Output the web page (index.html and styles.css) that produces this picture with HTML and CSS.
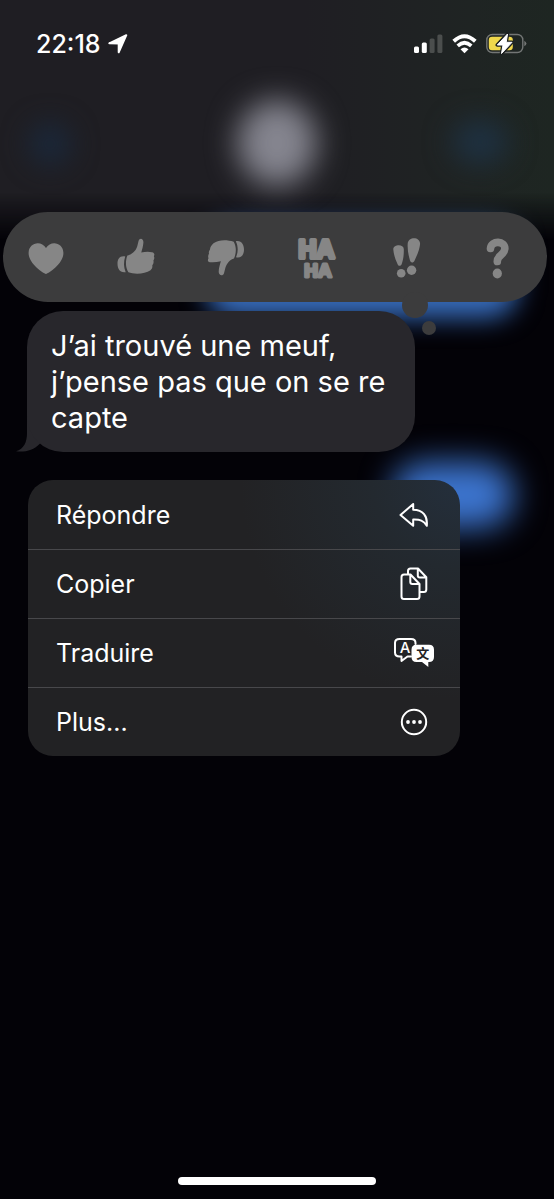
FILE: index.html
```html
<!DOCTYPE html>
<html lang="fr">
<head>
<meta charset="utf-8">
<meta name="viewport" content="width=device-width, initial-scale=1">
<title>Messages</title>
<link rel="stylesheet" href="styles.css">
</head>
<body>
<div class="backdrop" aria-hidden="true">
  <div class="glow sent-one"></div>
  <div class="glow sent-two"></div>
  <div class="glow nav-shade"></div>
  <div class="glow back"></div>
  <div class="glow avatar"></div>
  <div class="glow video"></div>
</div>
<header class="status">
  <div class="status-group">
    <time class="clock">22:18</time>
    <svg class="arrow" width="20" height="20" viewBox="0 0 20 20" aria-hidden="true"><path d="M1.300 9.300 18.300 1.200 10.700 18.300V9.500Z" fill="#fff" stroke="#fff" stroke-width="2" stroke-linejoin="round"/></svg>
  </div>
  <div class="status-group right">
    <svg width="30" height="20" viewBox="0 0 30 20" aria-hidden="true">
      <rect x="0" y="12.500" width="5" height="6.500" rx="1.500" fill="#fff"/>
      <rect x="7.800" y="8.500" width="5" height="10.500" rx="1.500" fill="#fff"/>
      <rect x="15.600" y="4.500" width="5" height="14.500" rx="1.500" fill="#4b4e4d"/>
      <rect x="23.400" y=".5" width="5" height="18.500" rx="1.500" fill="#4b4e4d"/>
    </svg>
    <svg width="26" height="20" viewBox="0 0 26 20" aria-hidden="true">
      <path d="M1.700 7.300Q12.500-2.700 23.300 7.300" fill="none" stroke="#fff" stroke-width="3.900"/>
      <path d="M5.700 11.900Q12.500 5.600 19.300 11.900" fill="none" stroke="#fff" stroke-width="3.600"/>
      <path d="M8.500 15.300Q12.500 11.800 16.500 15.300L12.500 19.300Z" fill="#fff"/>
    </svg>
    <svg width="41" height="24" viewBox="0 0 41 24" aria-hidden="true">
      <rect x=".8" y="2.500" width="36" height="18" rx="5.500" fill="none" stroke="#737675" stroke-width="1.400"/>
      <path d="M38.300 8.700q4.200 2.800 0 5.600z" fill="#737675"/>
      <rect x="2.800" y="4.700" width="24" height="13.600" rx="3.300" fill="#f0d84c"/>
      <path d="M21.500 2 11.300 13H17L15.500 21.500 26 10.300H20.200Z" fill="#1d2121" stroke="#1d2121" stroke-width="3.600" stroke-linejoin="round"/>
      <path d="M21.500 2 11.300 13H17L15.500 21.500 26 10.300H20.200Z" fill="#fff" stroke="#fff" stroke-width="1" stroke-linejoin="round"/>
    </svg>
  </div>
</header>
<main class="focus">
  <div class="reactions" role="toolbar" aria-label="Réactions">
    <button class="reaction" aria-label="J’adore"><svg width="44" height="44" viewBox="0 0 44 44"><path d="M22 39C19 38 4.600 28.800 4.600 18 4.600 7.500 17.200 5 22 13 26.800 5 39.400 7.500 39.400 18 39.400 28.800 25 38 22 39Z"/></svg></button>
    <button class="reaction" aria-label="J’aime"><svg width="44" height="44" viewBox="0 0 44 44"><path d="M13.400 20.600C17.500 19.500 21.500 16.500 23.200 11.500L24.600 5.700C25.500 2.500 29.600 3 29.400 7.500 29.200 11.500 28 14.500 27.300 17.600Q33 16.200 38 17.200C40.500 17.700 40.800 19.500 39.900 21.200 40.700 23 40.300 24.500 39.400 25.600 39.900 27.500 39.500 29 38.300 30.300 38.600 32.500 38 34 36.500 35.200 31 39.200 20 39.500 14.400 37.200 11.500 33 11.200 26 13.400 20.600Z"/><path d="M11.200 21.500C5.500 20.500 3.500 24.500 3.500 28.500 3.500 33.500 5.500 38 11.700 37.200 9.500 32 9.500 27 11.200 21.500Z"/></svg></button>
    <button class="reaction" aria-label="Je n’aime pas"><svg width="44" height="44" viewBox="0 0 44 44"><path d="M30 23.500C26 24.500 22.500 28.500 21.200 33.500L20 38.200C19 41.500 14.500 40.800 14.700 36.500 14.800 33 16 29 16.900 26.200Q11 27.800 6 27.200C3.500 26.900 3.500 25 4.500 23.200 3.800 21.500 4.200 20 5 18.800 4.500 17 5.200 15.500 6 14.400 6 12 7.500 10 9.500 8.200 14.500 4.500 23 4.500 29.700 6.700 32.500 11.500 32.500 18 30 23.500Z"/><path d="M31.800 6.200C37.500 5 40 10 40 14.500 40 19.500 37.500 23.500 32 22.200 34.300 17 34.300 11.500 31.800 6.200Z"/></svg></button>
    <button class="reaction" aria-label="Haha"><svg class="haha" width="44" height="44" viewBox="0 0 44 44"><text class="ha-large" x="21.500" y="23">HA</text><text class="ha-small" x="23" y="42">HA</text></svg></button>
    <button class="reaction" aria-label="Exclamation"><svg width="44" height="44" viewBox="0 0 44 44"><path d="M8.300 14.500C8 9.500 18.500 8.500 18.800 14 19 20.500 18 25.500 16.800 28.800 16 31.500 13.300 31.500 12.500 29 10.500 24.500 8.700 20 8.300 14.500Z"/><path d="M22.700 8.500C23.500 1.300 35.200 1.500 35.100 9 34.500 15 31.500 21.500 29.500 25.700 28.400 28.100 25.700 28 25 25.500 23.500 20.500 22.300 14.500 22.700 8.500Z"/><circle cx="16.200" cy="38.200" r="4.300"/><circle cx="26.600" cy="35.200" r="4.700"/></svg></button>
    <button class="reaction" aria-label="Question"><svg width="44" height="44" viewBox="0 0 44 44"><path d="M15.500 13.500C16 5 30.500 5.500 29.800 14 29.300 20 22 20.500 22.300 26.500" fill="none" stroke="currentColor" stroke-width="7.600" stroke-linecap="round"/><ellipse cx="22.300" cy="38.500" rx="4.600" ry="5"/></svg></button>
  </div>
  <div class="message">J’ai trouvé une meuf, j’pense pas que on se re capte
    <svg class="tail" width="32" height="48" viewBox="0 0 32 48" aria-hidden="true"><path d="M11 0V29C11 38 8 45 0 47.300 9 48.500 18 46 23 40.500L30 34V0Z" fill="#28272c"/></svg>
  </div>
  <div class="menu" role="menu">
    <button class="item" role="menuitem">Répondre
      <svg width="44" height="36" viewBox="0 0 44 36"><path d="M21.200 7 8.500 18 21.200 28.800V22.600C28 22.400 31.600 23.400 34.800 28.800 35.800 19 31 12.900 21.200 12.700Z"/></svg>
    </button>
    <button class="item" role="menuitem">Copier
      <svg width="44" height="36" viewBox="0 0 44 36"><path d="M16 8V5Q16 2.500 18.500 2.500H26L34.300 11.300V23.500Q34.300 26 31.800 26H28M25.800 3V9.500Q25.800 11.500 27.800 11.500H34M12 8.500H18.500L27.500 18V30.500Q27.500 33 25 33H12Q9.500 33 9.500 30.500V11Q9.500 8.500 12 8.500M18.300 9V16Q18.300 18 20.300 18H27"/></svg>
    </button>
    <button class="item" role="menuitem">Traduire
      <svg width="44" height="36" viewBox="0 0 44 36"><path d="M19 21.500H15.500L9.500 26V21.500H7.500Q3 21.500 3 17.500V8Q3 4 7.500 4H19Q23.500 4 23.500 8V9"/><path class="solid" d="M24.500 9.800H37Q42 9.800 42 14.800V22Q42 27 37 27H36.300V32L30 27H24.500Q19.500 27 19.500 22V14.800Q19.500 9.800 24.500 9.800Z"/><text x="13" y="17.500" class="latin">A</text><text x="30.800" y="23" class="han">文</text></svg>
    </button>
    <button class="item" role="menuitem">Plus...
      <svg width="44" height="36" viewBox="0 0 44 36"><circle cx="22" cy="18" r="12.200"/><g class="dots"><circle cx="16" cy="18" r="1.900"/><circle cx="22" cy="18" r="1.900"/><circle cx="28" cy="18" r="1.900"/></g></svg>
    </button>
  </div>
</main>
<footer class="home"><div class="home-bar"></div></footer>
</body>
</html>
```
FILE: styles.css
```css
* { box-sizing: border-box; }
body {
  margin: 0;
  min-height: 100vh;
  display: flex;
  flex-direction: column;
  position: relative;
  overflow-x: hidden;
  background: #030207;
  color: #fff;
  font-family: Inter, "Liberation Sans", "Noto Sans CJK SC", sans-serif;
}
button { border: 0; background: none; color: inherit; font: inherit; padding: 0; }
svg { display: block; flex: none; }

.backdrop { position: absolute; inset: 0; overflow: hidden; z-index: -1; }
.glow { position: absolute; }
.nav-shade {
  inset: 0 0 auto;
  height: 240px;
  background: linear-gradient(90deg, #1f1e23 55%, #1f2423 85%, #1e2622);
  mask-image: linear-gradient(#000 80%, transparent);
}
.back { left: 28px; top: 122px; width: 44px; height: 44px; border-radius: 50%; background: #1b2738; filter: blur(13px); }
.avatar { left: 50%; top: 100px; width: 80px; height: 86px; margin-left: -40px; border-radius: 50%; background: #85858f; filter: blur(15px); }
.video { right: 46px; top: 120px; width: 56px; height: 44px; border-radius: 50%; background: #1e3142; filter: blur(14px); }
.sent-one { left: 206px; right: 36px; top: 218px; height: 100px; border-radius: 30px; background: #386dbd; filter: blur(13px); }
.sent-two { left: 392px; right: 40px; top: 462px; height: 66px; border-radius: 33px; background: #3c74ce; filter: blur(16px); }

.status { display: flex; justify-content: space-between; align-items: center; height: 88px; padding: 0 27px 0 36px; }
.status-group { display: flex; align-items: center; gap: 7px; }
.right { gap: 8px; }
.clock { font-size: 25px; font-weight: 500; line-height: 32px; }

.focus { flex: 1; display: flex; flex-direction: column; align-items: flex-start; padding: 124px 7px 0 3px; }
.reactions {
  position: relative;
  z-index: 1;
  align-self: stretch;
  display: flex;
  justify-content: space-between;
  align-items: center;
  height: 90px;
  padding: 0 20px 0 13px;
  border-radius: 45px;
  background: #3c3c3d;
  color: #868686;
}
.reactions::before, .reactions::after { content: ""; position: absolute; border-radius: 50%; background: #3c3c3d; }
.reactions::before { right: 119px; bottom: -16px; width: 26px; height: 26px; }
.reactions::after { right: 111px; bottom: -33px; width: 14px; height: 14px; }
.reaction { display: flex; align-items: center; justify-content: center; width: 60px; height: 60px; }
.reaction svg { fill: currentColor; overflow: visible; }
.haha { font-family: "Liberation Sans", sans-serif; font-weight: 700; stroke: currentColor; stroke-linejoin: round; text-anchor: middle; }
.ha-large { font-size: 25px; stroke-width: 4px; }
.ha-small { font-size: 19px; stroke-width: 3px; }

.message {
  position: relative;
  width: 388px;
  max-width: 90%;
  margin: 9px 0 0 24px;
  padding: 17px 22px 16px 24px;
  border-radius: 36px;
  background: #28272c;
  font-size: 29px;
  line-height: 36px;
}
.tail { position: absolute; left: -11px; bottom: 0; z-index: -1; }

.menu {
  width: 432px;
  max-width: 90%;
  margin: 28px 0 0 25px;
  border-radius: 25px;
  overflow: hidden;
  background: radial-gradient(circle 220px at 100% 0, #242f3c, #23292f 40%, #222224);
}
.item { display: flex; align-items: center; justify-content: space-between; width: 100%; height: 69px; padding: 0 24px 0 28px; font-size: 25px; line-height: 32px; text-align: left; }
.item + .item { border-top: 1px solid #48484b; }
.item svg { fill: none; stroke: #fff; stroke-width: 2; stroke-linejoin: round; stroke-linecap: round; }
.item .solid, .item .dots { fill: #fff; stroke: none; }
.item text { stroke: none; text-anchor: middle; }
.item .latin { fill: #fff; font-size: 15px; font-weight: 500; }
.item .han { fill: #222224; font-family: "Noto Sans CJK SC", sans-serif; font-size: 13px; font-weight: 700; }

.home { display: flex; justify-content: center; padding-bottom: 14px; }
.home-bar { width: 198px; height: 8px; border-radius: 4px; background: #fff; }
```
